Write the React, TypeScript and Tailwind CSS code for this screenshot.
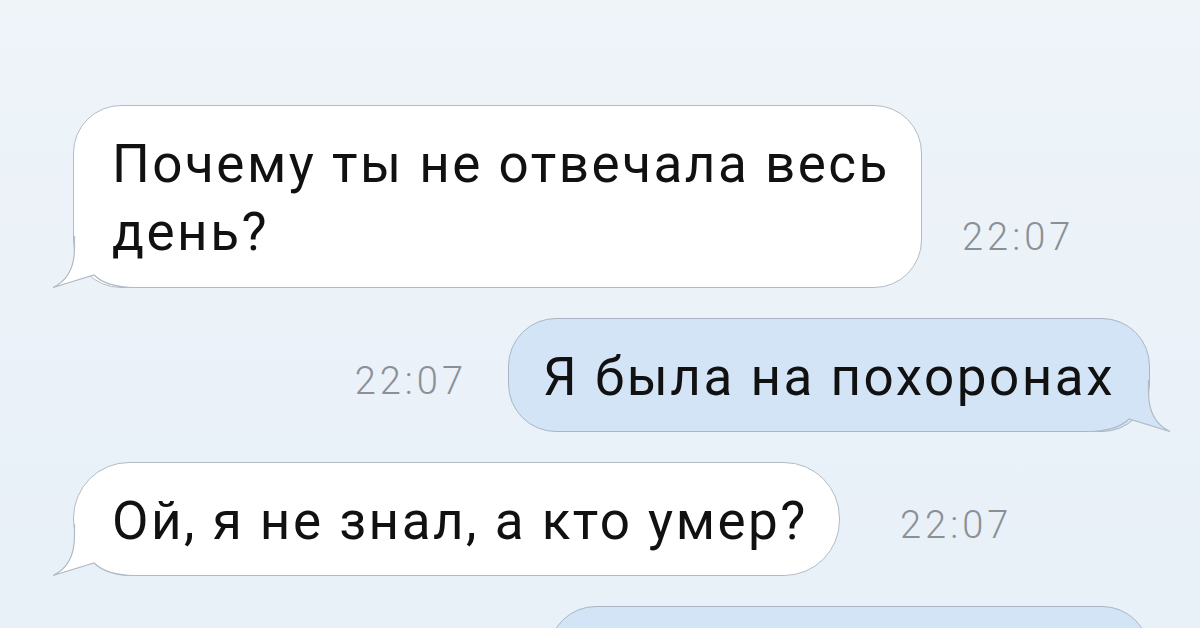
import React from 'react'

const font = { fontFamily: 'Roboto, "Noto Sans", sans-serif' }

function Tail({ side, fill }: { side: 'left' | 'right'; fill: string }) {
  // little speech tail drawn over the bottom corner of a bubble
  const pos = side === 'left' ? 'left-[-23px]' : 'right-[-23px] -scale-x-100'
  return (
    <svg
      className={`absolute bottom-[-1px] ${pos}`}
      width="84"
      height="52"
      viewBox="0 0 84 52"
    >
      <path d="M23.5,0 L23.5,12 C23.5,32 16,45 2,51.5 L43,39 Q56,51.5 84,51.5 L84,0 Z" fill={fill} />
      <path
        d="M23.5,0 L23.5,12 C23.5,32 16,45 2,51.5 L43,39 Q56,51.5 84,51.5"
        fill="none"
        stroke="#b3bbc4"
        strokeWidth="1.2"
      />
    </svg>
  )
}

function Time() {
  return (
    <span className="mb-[32px] block shrink-0 text-[38px] leading-none font-light tracking-[4px] text-[#8a9096]">
      22:07
    </span>
  )
}

const textCls = 'relative text-[53px] leading-[68px] tracking-[2.5px] whitespace-nowrap text-[#111]'

export default function App() {
  return (
    <div
      className="h-[628px] w-[1200px] overflow-hidden bg-gradient-to-b from-[#eef4f8] to-[#e8f0f8]"
      style={font}
    >
      <div className="flex flex-col gap-[30px] pt-[105px]">
        {/* incoming */}
        <div className="flex items-end pl-[73px]">
          <div className="relative h-[183px] w-[849px] rounded-[48px] border border-[#b3bbc4] bg-white pt-[24px] pl-[38px]">
            <Tail side="left" fill="#ffffff" />
            <p className={textCls}>
              Почему ты не отвечала весь
              <br />
              день?
            </p>
          </div>
          <div className="ml-[40px]">
            <Time />
          </div>
        </div>

        {/* outgoing */}
        <div className="flex items-end justify-end pr-[50px]">
          <Time />
          <div className="relative ml-[41px] h-[114px] w-[642px] rounded-[48px] border border-[#aab6c3] bg-[#d3e4f6] pt-[24px] pl-[34px]">
            <Tail side="right" fill="#d3e4f6" />
            <p className={textCls}>Я была на похоронах</p>
          </div>
        </div>

        {/* incoming */}
        <div className="flex items-end pl-[73px]">
          <div className="relative h-[114px] w-[767px] rounded-[56px] border border-[#b3bbc4] bg-white pt-[24px] pl-[38px]">
            <Tail side="left" fill="#ffffff" />
            <p className={textCls}>Ой, я не знал, а кто умер?</p>
          </div>
          <div className="ml-[60px]">
            <Time />
          </div>
        </div>

        {/* outgoing, cut off */}
        <div className="flex justify-end pr-[50px]">
          <div className="h-[114px] w-[602px] rounded-[48px] border border-[#aab6c3] bg-[#d3e4f6]" />
        </div>
      </div>
    </div>
  )
}
